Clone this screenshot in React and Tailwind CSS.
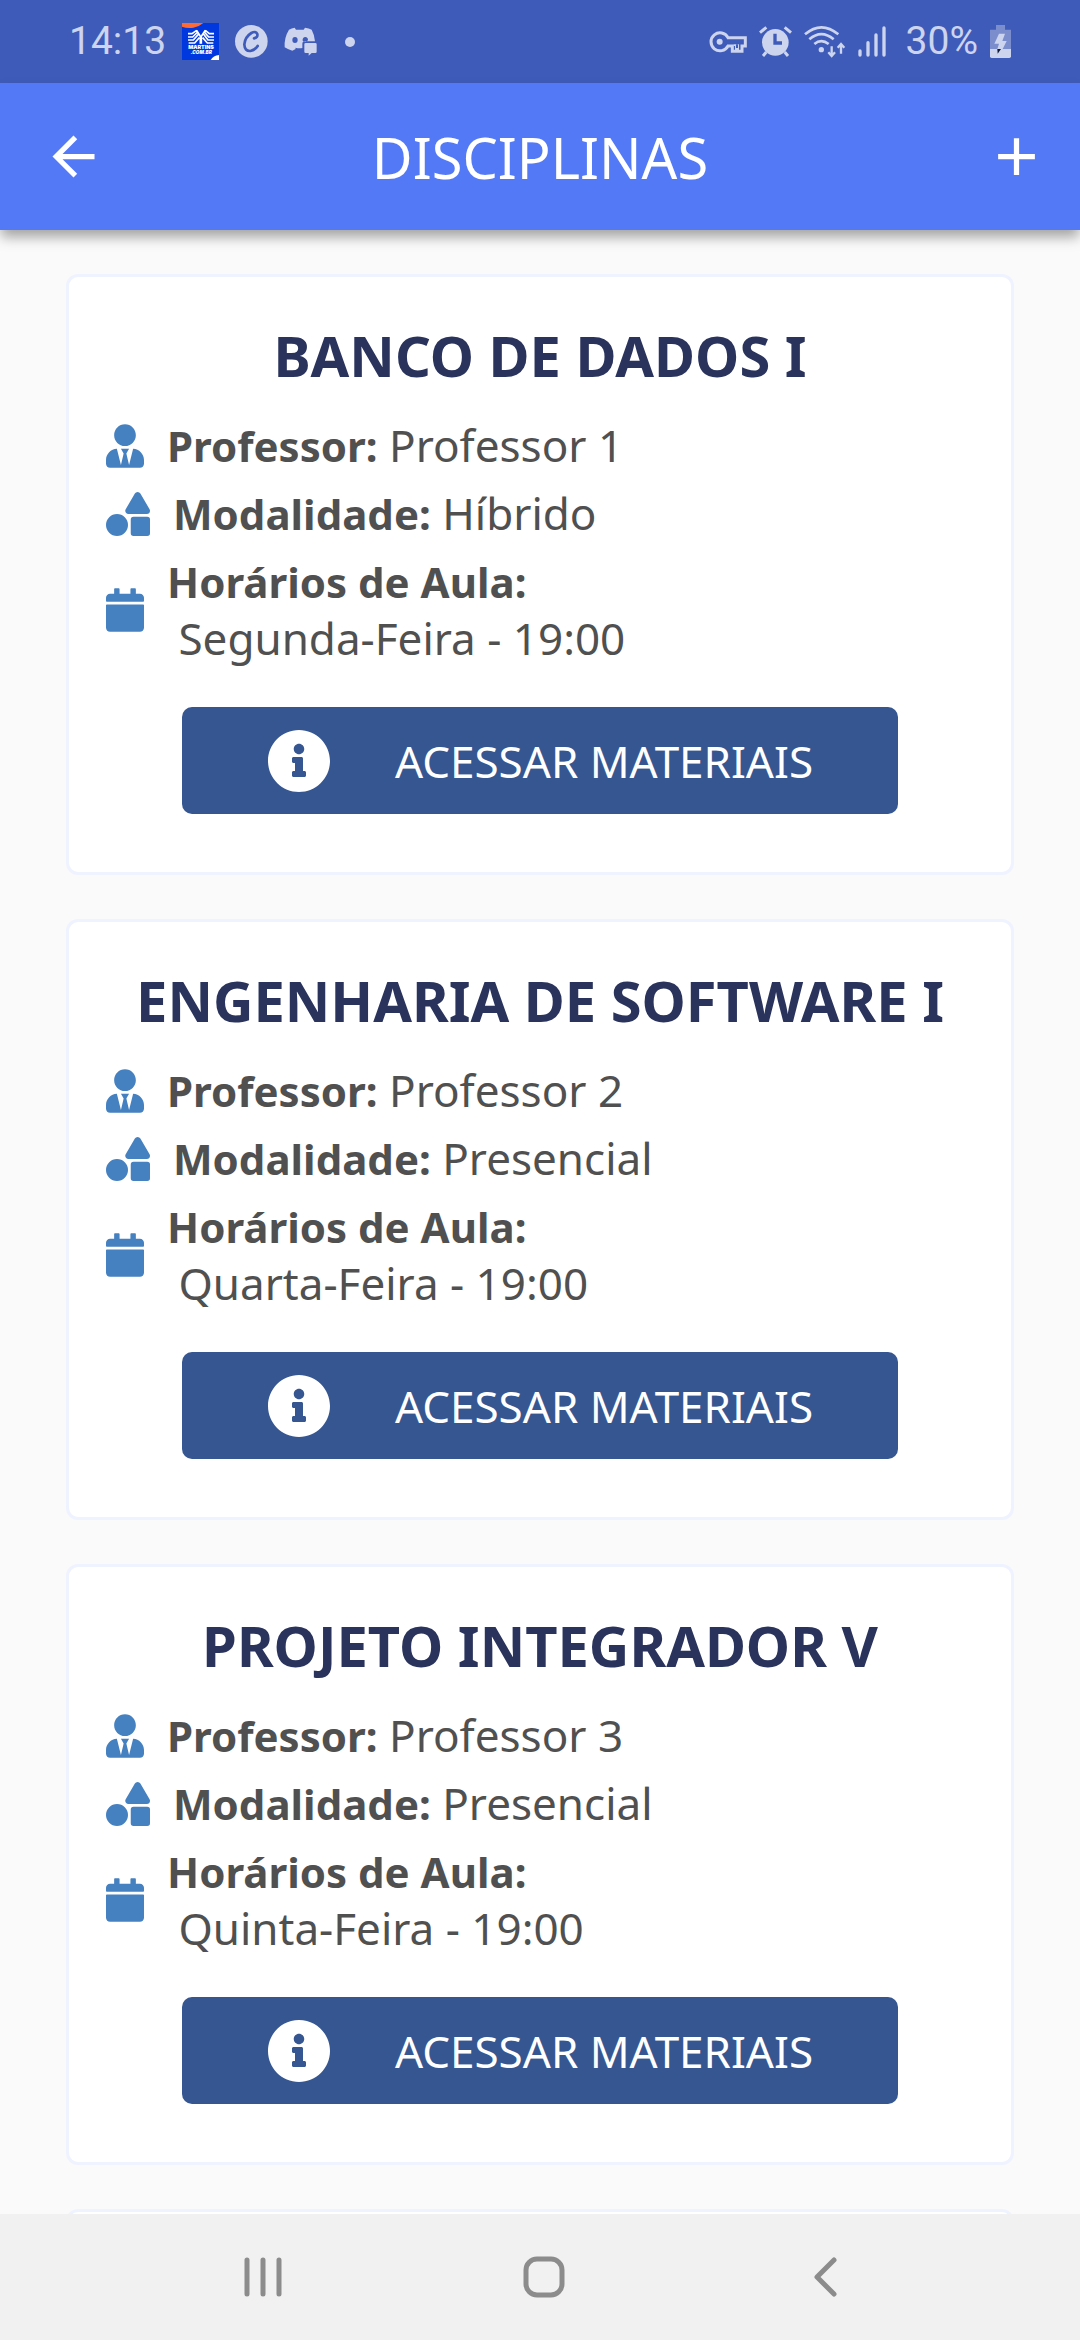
import React from "react";
import { FaUserTie, FaShapes, FaCalendar, FaInfoCircle } from "react-icons/fa";
import { MdArrowBack, MdAdd } from "react-icons/md";

const courses = [
  { name: "BANCO DE DADOS I", teacher: "Professor 1", mode: "Híbrido", time: "Segunda-Feira - 19:00" },
  { name: "ENGENHARIA DE SOFTWARE I", teacher: "Professor 2", mode: "Presencial", time: "Quarta-Feira - 19:00" },
  { name: "PROJETO INTEGRADOR V", teacher: "Professor 3", mode: "Presencial", time: "Quinta-Feira - 19:00" },
];

function StoreIcon() {
  return (
    <svg viewBox="0 0 111 111" className="size-[37px]" aria-hidden="true">
      <rect width="111" height="111" fill="#0038e0" />
      <path d="M0 0H64Q50 12 34 14Q16 17 0 11Z" fill="#ff6a33" />
      <path d="M111 96V111H86Q94 98 111 96Z" fill="#fff" />
      <g fill="none" stroke="#fff" strokeWidth="5">
        <path d="M18 32H30L44 22M18 42H32L47 27M18 51H34L49 34M20 60H38L52 44M44 22L55 40V62" />
        <path d="M96 32H82L70 22M96 42H80L67 27M96 51H78L65 34M94 60H76L62 44M70 22L58 40V62" />
      </g>
      <text x="57" y="77" textAnchor="middle" fill="#fff" fontSize="16" fontWeight="900" fontFamily="Inter, sans-serif">MARTINS</text>
      <text x="58" y="92" textAnchor="middle" fill="#fff" fontSize="14" fontWeight="900" fontStyle="italic" fontFamily="Inter, sans-serif">.COM.BR</text>
    </svg>
  );
}

function CoinIcon() {
  return (
    <svg viewBox="0 0 99 99" className="size-[33px]" aria-hidden="true">
      <circle cx="49" cy="49" r="49" fill="#ccd4ee" />
      <path
        d="M57 40Q69 38 67 27Q62 17 49 24Q30 36 28 58Q29 79 46 78Q60 76 68 63"
        fill="none" stroke="#3f5bb9" strokeWidth="8" strokeLinecap="round" strokeLinejoin="round"
      />
    </svg>
  );
}

function ChatIcon() {
  return (
    <svg viewBox="0 0 99 87" className="h-[29px] w-[33px]" aria-hidden="true" fill="#ccd4ee">
      <path
        fillRule="evenodd"
        d="M32 2L36 8H59L63 2Q75 4 83 8Q91 22 93 43H62Q55 43 55 51V63Q45 65 34 62L35 66L25 71Q10 66 2 61Q0 32 15 8Q23 4 32 2ZM33 30A8 9 0 1 0 33 48A8 9 0 1 0 33 30ZM64 30A8 9 0 0 0 56 41Q59 44 64 44Q70 44 72 39Q72 31 64 30Z"
      />
      <path d="M65 48H94Q98 48 98 52V74Q98 78 94 78H83L74 86V78H65Q61 78 61 74V52Q61 48 65 48Z" />
    </svg>
  );
}

function KeyIcon() {
  return (
    <svg viewBox="0 0 114 66" className="h-[22px] w-[38px]" aria-hidden="true">
      <path
        d="M57 20A27 27 0 1 0 57 45H70V61H99V45H109V20Z"
        fill="none" stroke="#ccd4ee" strokeWidth="9"
      />
      <path d="M74 40H90V60H78V45H74Z" fill="#ccd4ee" />
      <path d="M84 40V51" stroke="#3f5bb9" strokeWidth="6" />
      <circle cx="32" cy="32" r="9" fill="#ccd4ee" />
    </svg>
  );
}

function AlarmIcon() {
  return (
    <svg viewBox="0 0 99 93" className="h-[31px] w-[33px]" aria-hidden="true">
      <g fill="none" stroke="#ccd4ee" strokeWidth="9">
        <path d="M3 20L22 4M96 20L77 4M22 78L12 90M77 78L87 90" />
      </g>
      <circle cx="49" cy="49" r="40" fill="#ccd4ee" />
      <path d="M48 23V51H69" fill="none" stroke="#3f5bb9" strokeWidth="10" />
    </svg>
  );
}

function WifiIcon() {
  return (
    <svg viewBox="0 0 126 99" className="h-[33px] w-[42px]" aria-hidden="true" fill="none" stroke="#ccd4ee">
      <path d="M3 28Q52 -14 103 28M16 43Q52 12 89 43M31 57Q52 40 74 57" strokeWidth="8" />
      <circle cx="52" cy="74" r="8" fill="#ccd4ee" stroke="none" />
      <path d="M83 64V92M73 82L83 93L93 82M111 86V58M101 68L111 57L121 68" strokeWidth="7" />
    </svg>
  );
}

function SignalIcon() {
  return (
    <svg viewBox="0 0 84 93" className="h-[31px] w-[28px]" aria-hidden="true">
      <path d="M6 75V87M30 50V87M54 27V87M78 6V87" stroke="#ccd4ee" strokeWidth="10" strokeLinecap="round" />
    </svg>
  );
}

function BatteryIcon() {
  return (
    <svg viewBox="0 0 63 99" className="h-[33px] w-[21px]" aria-hidden="true">
      <path d="M18 0H45V14H63V72H0V14H18Z" fill="#7b8dcd" />
      <path d="M0 72H63V94Q63 99 58 99H5Q0 99 0 94Z" fill="#ccd4ee" />
      <path d="M27 26H45L37 48H50L38 72H22L27 56H13Z" fill="#ccd4ee" />
      <path d="M22 72H33L23 86Z" fill="#10183a" />
    </svg>
  );
}

function StatusBar() {
  return (
    <div className="flex h-[83px] shrink-0 items-center justify-between bg-[#3f5bb9] px-[69px] text-[39px] leading-none text-[#ccd4ee] font-['Roboto',sans-serif]">
      <div className="flex items-center gap-4">
        <span>14:13</span>
        <StoreIcon />
        <CoinIcon />
        <div className="flex items-center gap-7">
          <ChatIcon />
          <span className="size-[10px] rounded-full bg-[#ccd4ee]" />
        </div>
      </div>
      <div className="flex items-center gap-3">
        <KeyIcon />
        <AlarmIcon />
        <WifiIcon />
        <SignalIcon />
        <span className="pl-2">30%</span>
        <BatteryIcon />
      </div>
    </div>
  );
}

function Detail({ icon, children }) {
  return (
    <li className="flex items-center gap-[23px]">
      {icon}
      <div>{children}</div>
    </li>
  );
}

function CourseCard({ course }) {
  return (
    <article className="shrink-0 rounded-xl border-[3px] border-[#eff2ff] bg-white px-[37px] pt-10 pb-[58px]">
      <h2 className="text-center text-[56px] leading-[76px] font-bold text-[#29335c]">{course.name}</h2>
      <ul className="mt-6 flex flex-col gap-[11px] text-[44px] leading-[57px] text-[#505050]">
        <Detail icon={<FaUserTie className="h-[44px] w-[38px] shrink-0 text-[#4581c0]" />}>
          <strong className="text-[42px] leading-none font-bold">Professor:</strong> {course.teacher}
        </Detail>
        <Detail icon={<FaShapes className="size-[44px] shrink-0 text-[#4581c0]" />}>
          <strong className="text-[42px] leading-none font-bold">Modalidade:</strong> {course.mode}
        </Detail>
        <Detail icon={<FaCalendar className="h-[44px] w-[38px] shrink-0 text-[#4581c0]" />}>
          <strong className="block text-[42px] leading-[57px] font-bold">Horários de Aula:</strong>
          <span className="block whitespace-pre">{" " + course.time}</span>
        </Detail>
      </ul>
      <button
        type="button"
        className="mx-auto mt-10 flex h-[107px] items-center justify-center gap-16 rounded-[10px] bg-[#355691] px-[85px] text-[44px] leading-[60px] text-white"
      >
        <FaInfoCircle className="size-16 shrink-0" />
        <span>ACESSAR MATERIAIS</span>
      </button>
    </article>
  );
}

export default function App() {
  return (
    <div className="flex h-screen flex-col bg-[#fafafa] font-['Noto_Sans',sans-serif]">
      <StatusBar />
      <header className="z-10 grid h-[147px] shrink-0 grid-cols-[1fr_auto_1fr] items-center bg-[#5379f7] text-white shadow-[0_8px_12px_-1px_rgba(0,0,0,0.35)]">
        <div className="flex justify-start pl-[42px]">
          <button type="button" aria-label="Voltar">
            <MdArrowBack className="size-[63px]" />
          </button>
        </div>
        <h1 className="text-[56px] leading-[76px]">DISCIPLINAS</h1>
        <div className="flex justify-end pr-8">
          <button type="button" aria-label="Adicionar">
            <MdAdd className="size-[63px]" />
          </button>
        </div>
      </header>
      <main className="flex min-h-0 flex-1 flex-col gap-11 overflow-y-auto px-[66px] pt-11 [scrollbar-width:none]">
        {courses.map((course) => (
          <CourseCard key={course.name} course={course} />
        ))}
        <article className="h-[601px] shrink-0 rounded-xl border-[3px] border-[#eff2ff] bg-white" />
      </main>
      <nav className="flex h-[126px] shrink-0 items-stretch bg-[#f1f1f1] pr-[115px] pl-[123px]">
        <button type="button" aria-label="Recentes" className="flex flex-1 items-center justify-center">
          <svg viewBox="0 0 40 42" className="h-[42px] w-[40px]" fill="none" stroke="#8c8c8c" strokeWidth="5" strokeLinecap="round">
            <path d="M4 4V38M20 4V38M36 4V38" />
          </svg>
        </button>
        <button type="button" aria-label="Início" className="flex flex-1 items-center justify-center">
          <svg viewBox="0 0 42 42" className="size-[42px]" fill="none" stroke="#8c8c8c" strokeWidth="5">
            <rect x="3" y="3" width="36" height="36" rx="11" />
          </svg>
        </button>
        <button type="button" aria-label="Voltar ao anterior" className="flex flex-1 items-center justify-center">
          <svg viewBox="0 0 24 42" className="h-[42px] w-[24px]" fill="none" stroke="#8c8c8c" strokeWidth="5" strokeLinecap="round" strokeLinejoin="round">
            <path d="M21 4L4 21L21 38" />
          </svg>
        </button>
      </nav>
    </div>
  );
}
